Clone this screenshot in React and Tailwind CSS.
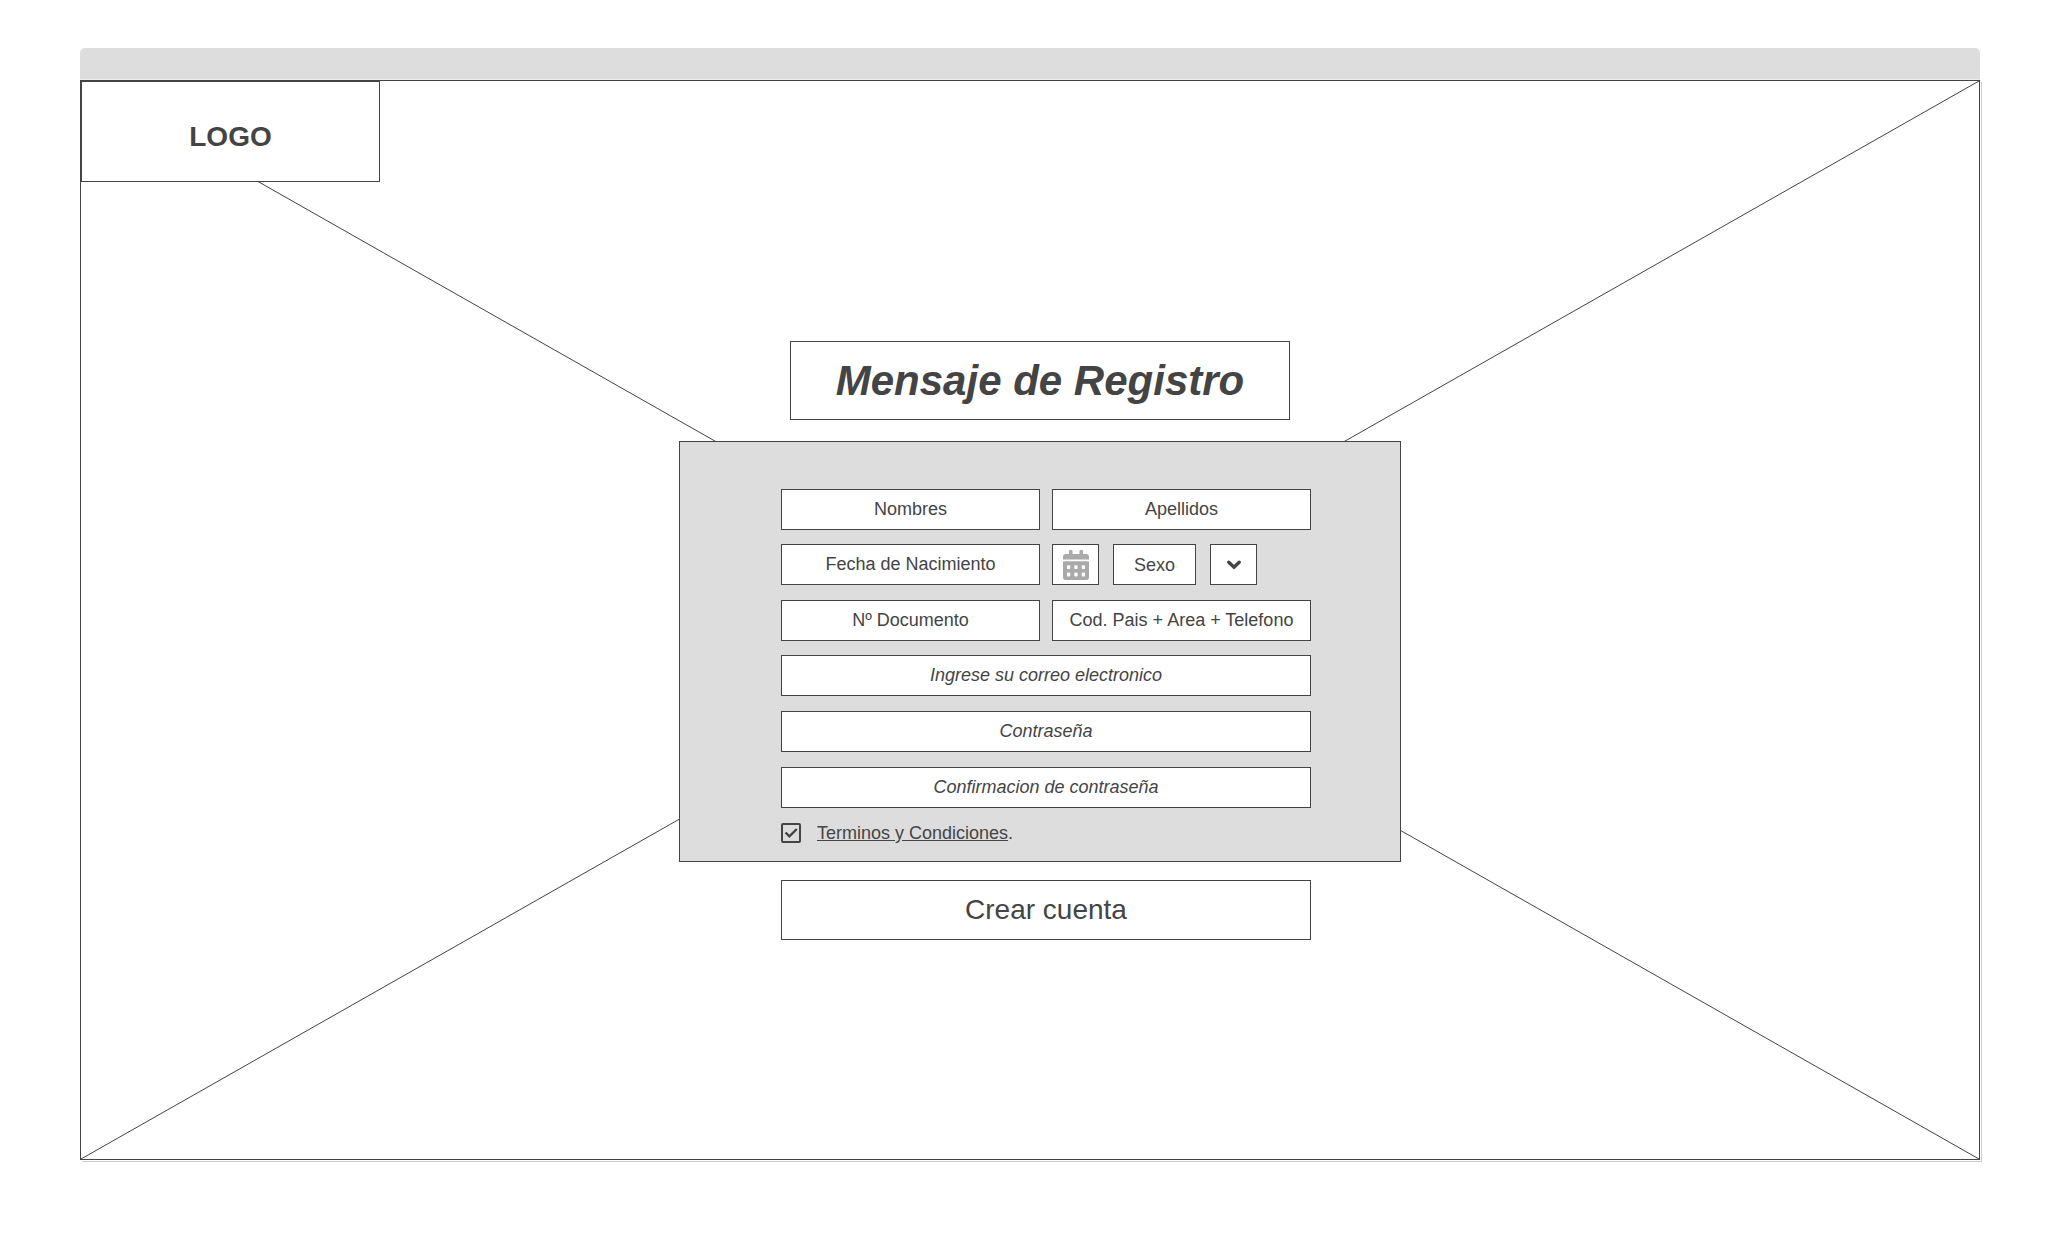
import { useState } from "react";

const box =
  "min-w-0 border border-[#444] bg-white text-center text-lg text-[#444] outline-none placeholder:text-[#444] placeholder:opacity-100";

function Field({ label, type = "text", italic = false }) {
  return (
    <input
      type={type}
      aria-label={label}
      placeholder={label}
      className={`${box} h-[41px] w-full ${italic ? "italic" : ""}`}
    />
  );
}

function CalendarIcon() {
  return (
    <svg viewBox="0 0 26 30" className="h-[30px] w-[26px]" fill="#aaa" aria-hidden="true">
      <path
        fillRule="evenodd"
        d="M6 1q0-1 1-1h1.500q1 0 1 1v3h7V1q0-1 1-1H19q1 0 1 1v3h3.200Q26 4 26 6.800V9.500H0V6.800Q0 4 2.800 4H6zM0 11.300h26v15.900q0 2.800-2.800 2.800H2.800Q0 30 0 27.200zM4 16v2.200q0 .8.800.8h1.700q.8 0 .8-.8V16q0-.8-.8-.8H4.800Q4 15.200 4 16zM11.300 16v2.200q0 .8.800.8h1.700q.8 0 .8-.8V16q0-.8-.8-.8h-1.700q-.8 0-.8.8zM18.700 16v2.200q0 .8.800.8h1.700q.8 0 .8-.8V16q0-.8-.8-.8h-1.700q-.8 0-.8.800zM4 23.400v2.200q0 .8.800.8h1.700q.8 0 .8-.8v-2.200q0-.8-.8-.8H4.800q-.8 0-.8.800zM11.300 23.400v2.200q0 .8.800.8h1.700q.8 0 .8-.8v-2.200q0-.8-.8-.8h-1.700q-.8 0-.8.800zM18.700 23.400v2.200q0 .8.800.8h1.700q.8 0 .8-.8v-2.200q0-.8-.8-.8h-1.700q-.8 0-.8.800z"
      />
    </svg>
  );
}

export default function App() {
  const [accepted, setAccepted] = useState(true);

  return (
    <div className="flex min-h-screen flex-col bg-white px-20 pt-12 pb-20 font-['Liberation_Sans',Arial,sans-serif] text-[#444]">
      <div className="h-8 rounded-t-[5px] border-b border-[#eee] bg-[#ddd]" />
      <div className="relative isolate flex grow flex-col border border-[#444] shadow-[1px_1px_0_#fff,2px_2px_0_#ccc]">
        <svg className="absolute inset-0 -z-10 size-full" aria-hidden="true">
          <line x1="0" y1="0" x2="100%" y2="100%" stroke="#444" />
          <line x1="100%" y1="0" x2="0" y2="100%" stroke="#444" />
        </svg>

        <header className="flex h-[101px] w-[299px] items-center justify-center border border-[#444] bg-white pt-2.5 text-[28px] font-bold">
          LOGO
        </header>

        <main className="flex flex-col items-center pt-[159px] pl-5">
          <h1 className="flex h-[79px] w-[500px] items-center justify-center border border-[#444] bg-white text-[42px] font-bold italic">
            Mensaje de Registro
          </h1>

          <form
            id="registro"
            className="mt-[21px] flex w-[722px] flex-col gap-[15px] border border-[#444] bg-[#ddd] pt-[47px] pr-[89px] pb-[18px] pl-[101px]"
          >
            <div className="grid grid-cols-2 gap-x-3 gap-y-3.5">
              <Field label="Nombres" />
              <Field label="Apellidos" />
              <Field label="Fecha de Nacimiento" />
              <div className="flex gap-3.5">
                <button
                  type="button"
                  aria-label="Abrir calendario"
                  className={`${box} flex h-[41px] w-[47px] items-center justify-center`}
                >
                  <CalendarIcon />
                </button>
                <select
                  aria-label="Sexo"
                  defaultValue=""
                  className={`${box} h-[41px] w-[83px] appearance-none [text-align-last:center]`}
                >
                  <option value="">Sexo</option>
                  <option value="f">Femenino</option>
                  <option value="m">Masculino</option>
                </select>
                <button
                  type="button"
                  aria-label="Desplegar sexo"
                  className={`${box} flex h-[41px] w-[47px] items-center justify-center`}
                >
                  <svg
                    viewBox="0 0 14 10"
                    className="h-2.5 w-3.5"
                    fill="none"
                    stroke="#444"
                    strokeWidth="3.4"
                    strokeLinecap="round"
                    aria-hidden="true"
                  >
                    <path d="M1.800 2.200 7 7.200l5.200-5" />
                  </svg>
                </button>
              </div>
            </div>
            <div className="grid grid-cols-2 gap-x-3 gap-y-3.5">
              <Field label="Nº Documento" />
              <Field label="Cod. Pais + Area + Telefono" type="tel" />
              <div className="col-span-2">
                <Field label="Ingrese su correo electronico" type="email" italic />
              </div>
            </div>
            <Field label="Contraseña" type="password" italic />
            <Field label="Confirmacion de contraseña" type="password" italic />
            <div className="flex items-center gap-4">
              <span className="relative flex size-5">
                <input
                  type="checkbox"
                  id="terminos"
                  checked={accepted}
                  onChange={(e) => setAccepted(e.target.checked)}
                  className="peer size-5 appearance-none rounded-xs border-2 border-[#444]"
                />
                <svg
                  viewBox="0 0 20 20"
                  className="pointer-events-none absolute inset-0 hidden size-5 peer-checked:block"
                  fill="none"
                  stroke="#444"
                  strokeWidth="2.4"
                  aria-hidden="true"
                >
                  <path d="M4.500 9.500 8.400 13.400 15.800 6" />
                </svg>
              </span>
              <label htmlFor="terminos" className="text-lg/5">
                <a href="#terminos" className="underline">
                  Terminos y Condiciones
                </a>
                .
              </label>
            </div>
          </form>

          <div className="mt-[18px] flex w-[722px] pr-[90px] pl-[102px]">
            <button
              type="submit"
              form="registro"
              className="h-[60px] w-full border border-[#444] bg-white text-[28px]"
            >
              Crear cuenta
            </button>
          </div>
        </main>
      </div>
    </div>
  );
}
